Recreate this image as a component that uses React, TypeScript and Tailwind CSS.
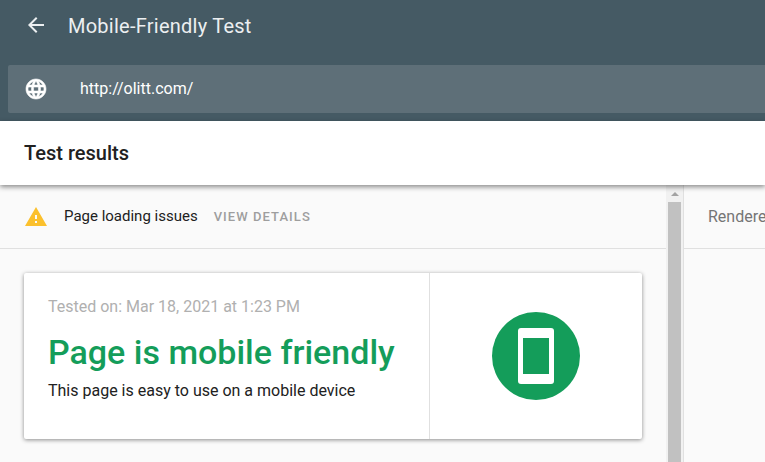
export default function App() {
  return (
    <div className="w-[765px] h-[462px] overflow-hidden flex flex-col bg-[#fafafa] font-['Roboto',sans-serif]">
      {/* HEADER */}
      <header className="h-[121px] shrink-0 bg-[#455a64] flex flex-col">
        <div className="h-[65px] flex items-start pt-[13px] pl-[24px]">
          <svg width="24" height="24" viewBox="0 0 24 24" className="shrink-0 fill-[#eceff1]">
            <path d="M20 11H7.83l5.59-5.59L12 4l-8 8 8 8 1.41-1.41L7.83 13H20v-2z" />
          </svg>
          <h1 className="ml-[20px] text-[20px] leading-[26px] tracking-[0.25px] text-[#eceff1]">Mobile-Friendly Test</h1>
        </div>
        <div className="h-[48px] ml-2 bg-[#5e6f78] rounded-l-[2px] flex items-center pl-[16px]">
          <svg width="24" height="24" viewBox="0 0 24 24" className="shrink-0 fill-white stroke-white stroke-[0.6]">
            <path d="M11.99 2C6.47 2 2 6.48 2 12s4.47 10 9.99 10C17.52 22 22 17.52 22 12S17.52 2 11.99 2zm6.93 6h-2.95c-.32-1.25-.78-2.45-1.38-3.56 1.84.63 3.37 1.91 4.33 3.56zM12 4.04c.83 1.2 1.48 2.53 1.91 3.96h-3.82c.43-1.43 1.08-2.76 1.91-3.96zM4.26 14C4.1 13.36 4 12.69 4 12s.1-1.36.26-2h3.38c-.08.66-.14 1.32-.14 2 0 .68.06 1.34.14 2H4.26zm.82 2h2.95c.32 1.25.78 2.45 1.38 3.56-1.84-.63-3.37-1.9-4.33-3.56zm2.95-8H5.08c.96-1.66 2.49-2.93 4.33-3.56C8.81 5.55 8.35 6.75 8.03 8zM12 19.96c-.83-1.2-1.48-2.53-1.91-3.96h3.82c-.43 1.43-1.08 2.76-1.91 3.96zM14.34 14H9.66c-.09-.66-.16-1.32-.16-2 0-.68.07-1.35.16-2h4.68c.09.65.16 1.32.16 2 0 .68-.07 1.34-.16 2zm.25 5.56c.6-1.11 1.06-2.31 1.38-3.56h2.95c-.96 1.65-2.49 2.93-4.33 3.56zM16.36 14c.08-.66.14-1.32.14-2 0-.68-.06-1.34-.14-2h3.38c.16.64.26 1.31.26 2s-.1 1.36-.26 2h-3.38z" />
          </svg>
          <span className="ml-[32px] text-[16px] text-white">http://olitt.com/</span>
        </div>
      </header>

      {/* TEST RESULTS BAR */}
      <div className="relative z-10 h-[64px] shrink-0 bg-white flex items-center pl-[24px] shadow-[0_2px_5px_rgba(0,0,0,0.45)]">
        <h2 className="text-[20px] font-medium text-[#212121]">Test results</h2>
      </div>

      {/* PANELS */}
      <div className="flex flex-1 min-h-0">
        <div className="w-[666px] shrink-0 flex flex-col">
          <div className="h-[64px] shrink-0 border-b border-[#e0e0e0] flex items-center pl-[24px]">
            <svg width="24" height="24" viewBox="0 0 24 24" className="shrink-0 fill-[#fbc02d]">
              <path d="M1 21h22L12 2 1 21zm12-3h-2v-2h2v2zm0-4h-2v-4h2v4z" />
            </svg>
            <span className="ml-[16px] text-[15px] text-[#212121]">Page loading issues</span>
            <span className="ml-[16px] text-[13px] font-medium tracking-[1.05px] text-[#9e9e9e]">VIEW DETAILS</span>
          </div>
          <div className="pl-[24px] pt-[24px]">
            <div className="w-[618px] h-[166px] bg-white rounded-[2px] shadow-[0_1px_4px_rgba(0,0,0,0.45)] flex">
              <div className="w-[406px] shrink-0 border-r border-[#e0e0e0] pl-[24px] pt-[23px]">
                <p className="text-[16px] leading-[22px] text-[#b0b0b0]">Tested on: Mar 18, 2021 at 1:23 PM</p>
                <p className="mt-[13px] text-[34px] leading-[42px] font-medium text-[#149d5a]">Page is mobile friendly</p>
                <p className="mt-[7px] text-[16px] leading-[22px] text-[#212121]">This page is easy to use on a mobile device</p>
              </div>
              <div className="flex-1 flex items-center justify-center">
                <div className="w-[88px] h-[88px] rounded-full bg-[#149d5a] flex items-center justify-center">
                  <div className="w-[36px] h-[56px] bg-white rounded-[3px] flex items-center justify-center">
                    <div className="w-[26px] h-[36px] bg-[#149d5a]" />
                  </div>
                </div>
              </div>
            </div>
          </div>
        </div>

        {/* SCROLLBAR */}
        <div className="w-[17px] shrink-0 bg-[#f1f1f1] flex flex-col items-center">
          <div className="h-[17px] w-full flex items-center justify-center">
            <div className="w-0 h-0 border-x-[4px] border-x-transparent border-b-[4px] border-b-[#a3a3a3]" />
          </div>
          <div className="w-[13px] flex-1 bg-[#c1c1c1]" />
        </div>

        {/* RENDERED PANEL */}
        <div className="flex-1 border-l border-[#e0e0e0] min-w-0">
          <div className="h-[64px] border-b border-[#e0e0e0] flex items-center pl-[24px] overflow-hidden">
            <span className="text-[16px] text-[#757575] whitespace-nowrap">Rendered page</span>
          </div>
        </div>
      </div>
    </div>
  );
}
